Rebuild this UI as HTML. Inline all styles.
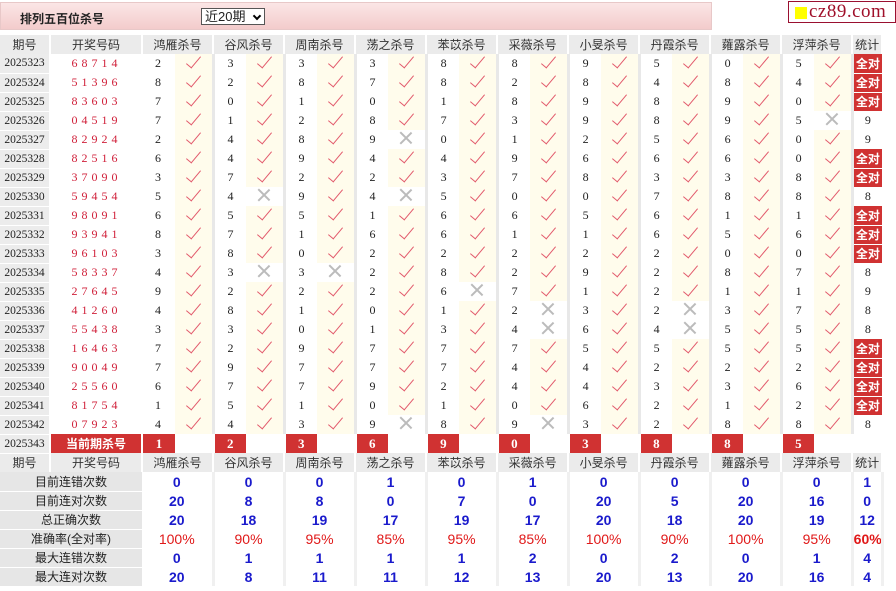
<!DOCTYPE html>
<html><head><meta charset="utf-8">
<style>
*{margin:0;padding:0;box-sizing:border-box}
body{width:896px;height:591px;background:#fff;font-family:"Liberation Sans","Noto Sans CJK SC",sans-serif;font-size:12px;color:#222;position:relative;overflow:hidden}
.top{position:absolute;left:0;top:2px;width:712px;height:28px;background:linear-gradient(#fbe6e6,#f3cccc);border:1px solid #e8c8c8}
.title{position:absolute;left:19px;top:7px;font-weight:bold;font-size:12px;color:#222}
.sel{position:absolute;left:200px;top:5px;width:64px;height:17px;border:1px solid #555;background:#fff;font-size:13px;line-height:15px;padding-left:3px}
.sel b{position:absolute;right:4px;top:4px;width:6px;height:6px;border-right:2px solid #000;border-bottom:2px solid #000;transform:rotate(45deg)}
.logo{position:absolute;left:788px;top:1px;width:108px;height:22px;border:1px solid #9a1030;background:#fff;overflow:hidden}
.logo i{position:absolute;left:6px;top:5px;width:12px;height:12px;background:#ffff00}
.logo span{position:absolute;left:20px;top:-1px;font-family:"Liberation Serif",serif;font-size:19px;color:#a0102a;letter-spacing:0.5px}
table{position:absolute;left:0;top:35px;border-collapse:collapse;table-layout:fixed;width:882px}
td{height:19px;padding:0;text-align:center;vertical-align:middle;white-space:nowrap;overflow:hidden}
.hd td{background:#ebebeb;border-right:2px solid #fff;font-size:12px;color:#333}
.p{background:#ececec;font-family:"Liberation Serif",serif;font-size:11.5px;border-right:2px solid #fff;border-bottom:1px solid #fff}
.h{color:#d0203a;font-family:"Liberation Serif",serif;letter-spacing:4px;font-size:12px}
.n{font-family:"Liberation Serif",serif;text-align:left;padding-left:13px;font-size:12px}
.c{background:#fffcec;border-right:3px solid #e8e8e8;position:relative}
.c.w{background:#fff}
.k{display:inline-block;width:7px;height:15px;border-right:1.6px solid #e25a6c;border-bottom:1.6px solid #e25a6c;transform:rotate(40deg);margin-top:-5px}
.x{display:inline-block;position:relative;width:14px;height:14px}
.x:before,.x:after{content:"";position:absolute;left:6px;top:-1px;width:1.5px;height:16px;background:#bbb;transform:rotate(45deg)}
.x:after{transform:rotate(-45deg)}
.t{font-family:"Liberation Serif",serif}
.t.a{background:#d03232;color:#fff;font-weight:bold;font-family:"Liberation Sans","Noto Sans CJK SC",sans-serif;font-size:12px;border-bottom:1px solid #fff}
.cur{background:#d03232;color:#fff;font-weight:bold;font-size:12px}
.kn{background:#d03232;color:#fff;font-weight:bold;font-family:"Liberation Serif",serif;font-size:13px;border-left:2px solid #fff}
.kc{border-right:3px solid #fff}
.lb{background:#e6e6e6;border-bottom:1px solid #fff;color:#222;font-size:12px}
.v{color:#1a1acc;font-weight:bold;font-size:14px;border-right:3px solid #f0f0f0}
.r{color:#e01818;font-weight:normal}
.r2{color:#e01818}
</style></head><body>
<div class="top"><div class="title">排列五百位杀号</div><div class="sel">近20期<b></b></div></div>
<div class="logo"><i></i><span>cz89.com</span></div>
<table>
<colgroup><col style="width:50px"><col style="width:92px">
<col style="width:33px"><col style="width:38px"><col style="width:33px"><col style="width:38px"><col style="width:33px"><col style="width:38px"><col style="width:33px"><col style="width:38px"><col style="width:33px"><col style="width:38px"><col style="width:33px"><col style="width:38px"><col style="width:33px"><col style="width:38px"><col style="width:33px"><col style="width:38px"><col style="width:33px"><col style="width:38px"><col style="width:33px"><col style="width:38px"><col style="width:30px"></colgroup>
<tr class="hd"><td>期号</td><td>开奖号码</td><td colspan="2">鸿雁杀号</td><td colspan="2">谷风杀号</td><td colspan="2">周南杀号</td><td colspan="2">荡之杀号</td><td colspan="2">苯苡杀号</td><td colspan="2">采薇杀号</td><td colspan="2">小旻杀号</td><td colspan="2">丹霞杀号</td><td colspan="2">蕹露杀号</td><td colspan="2">浮萍杀号</td><td>统计</td></tr>
<tr><td class="p">2025323</td><td class="h">68714</td><td class="n">2</td><td class="c"><i class="k"></i></td><td class="n">3</td><td class="c"><i class="k"></i></td><td class="n">3</td><td class="c"><i class="k"></i></td><td class="n">3</td><td class="c"><i class="k"></i></td><td class="n">8</td><td class="c"><i class="k"></i></td><td class="n">8</td><td class="c"><i class="k"></i></td><td class="n">9</td><td class="c"><i class="k"></i></td><td class="n">5</td><td class="c"><i class="k"></i></td><td class="n">0</td><td class="c"><i class="k"></i></td><td class="n">5</td><td class="c"><i class="k"></i></td><td class="t a">全对</td></tr>
<tr><td class="p">2025324</td><td class="h">51396</td><td class="n">8</td><td class="c"><i class="k"></i></td><td class="n">2</td><td class="c"><i class="k"></i></td><td class="n">8</td><td class="c"><i class="k"></i></td><td class="n">7</td><td class="c"><i class="k"></i></td><td class="n">8</td><td class="c"><i class="k"></i></td><td class="n">2</td><td class="c"><i class="k"></i></td><td class="n">8</td><td class="c"><i class="k"></i></td><td class="n">4</td><td class="c"><i class="k"></i></td><td class="n">8</td><td class="c"><i class="k"></i></td><td class="n">4</td><td class="c"><i class="k"></i></td><td class="t a">全对</td></tr>
<tr><td class="p">2025325</td><td class="h">83603</td><td class="n">7</td><td class="c"><i class="k"></i></td><td class="n">0</td><td class="c"><i class="k"></i></td><td class="n">1</td><td class="c"><i class="k"></i></td><td class="n">0</td><td class="c"><i class="k"></i></td><td class="n">1</td><td class="c"><i class="k"></i></td><td class="n">8</td><td class="c"><i class="k"></i></td><td class="n">9</td><td class="c"><i class="k"></i></td><td class="n">8</td><td class="c"><i class="k"></i></td><td class="n">9</td><td class="c"><i class="k"></i></td><td class="n">0</td><td class="c"><i class="k"></i></td><td class="t a">全对</td></tr>
<tr><td class="p">2025326</td><td class="h">04519</td><td class="n">7</td><td class="c"><i class="k"></i></td><td class="n">1</td><td class="c"><i class="k"></i></td><td class="n">2</td><td class="c"><i class="k"></i></td><td class="n">8</td><td class="c"><i class="k"></i></td><td class="n">7</td><td class="c"><i class="k"></i></td><td class="n">3</td><td class="c"><i class="k"></i></td><td class="n">9</td><td class="c"><i class="k"></i></td><td class="n">8</td><td class="c"><i class="k"></i></td><td class="n">9</td><td class="c"><i class="k"></i></td><td class="n">5</td><td class="c w"><i class="x"></i></td><td class="t">9</td></tr>
<tr><td class="p">2025327</td><td class="h">82924</td><td class="n">2</td><td class="c"><i class="k"></i></td><td class="n">4</td><td class="c"><i class="k"></i></td><td class="n">8</td><td class="c"><i class="k"></i></td><td class="n">9</td><td class="c w"><i class="x"></i></td><td class="n">0</td><td class="c"><i class="k"></i></td><td class="n">1</td><td class="c"><i class="k"></i></td><td class="n">2</td><td class="c"><i class="k"></i></td><td class="n">5</td><td class="c"><i class="k"></i></td><td class="n">6</td><td class="c"><i class="k"></i></td><td class="n">0</td><td class="c"><i class="k"></i></td><td class="t">9</td></tr>
<tr><td class="p">2025328</td><td class="h">82516</td><td class="n">6</td><td class="c"><i class="k"></i></td><td class="n">4</td><td class="c"><i class="k"></i></td><td class="n">9</td><td class="c"><i class="k"></i></td><td class="n">4</td><td class="c"><i class="k"></i></td><td class="n">4</td><td class="c"><i class="k"></i></td><td class="n">9</td><td class="c"><i class="k"></i></td><td class="n">6</td><td class="c"><i class="k"></i></td><td class="n">6</td><td class="c"><i class="k"></i></td><td class="n">6</td><td class="c"><i class="k"></i></td><td class="n">0</td><td class="c"><i class="k"></i></td><td class="t a">全对</td></tr>
<tr><td class="p">2025329</td><td class="h">37090</td><td class="n">3</td><td class="c"><i class="k"></i></td><td class="n">7</td><td class="c"><i class="k"></i></td><td class="n">2</td><td class="c"><i class="k"></i></td><td class="n">2</td><td class="c"><i class="k"></i></td><td class="n">3</td><td class="c"><i class="k"></i></td><td class="n">7</td><td class="c"><i class="k"></i></td><td class="n">8</td><td class="c"><i class="k"></i></td><td class="n">3</td><td class="c"><i class="k"></i></td><td class="n">3</td><td class="c"><i class="k"></i></td><td class="n">8</td><td class="c"><i class="k"></i></td><td class="t a">全对</td></tr>
<tr><td class="p">2025330</td><td class="h">59454</td><td class="n">5</td><td class="c"><i class="k"></i></td><td class="n">4</td><td class="c w"><i class="x"></i></td><td class="n">9</td><td class="c"><i class="k"></i></td><td class="n">4</td><td class="c w"><i class="x"></i></td><td class="n">5</td><td class="c"><i class="k"></i></td><td class="n">0</td><td class="c"><i class="k"></i></td><td class="n">0</td><td class="c"><i class="k"></i></td><td class="n">7</td><td class="c"><i class="k"></i></td><td class="n">8</td><td class="c"><i class="k"></i></td><td class="n">8</td><td class="c"><i class="k"></i></td><td class="t">8</td></tr>
<tr><td class="p">2025331</td><td class="h">98091</td><td class="n">6</td><td class="c"><i class="k"></i></td><td class="n">5</td><td class="c"><i class="k"></i></td><td class="n">5</td><td class="c"><i class="k"></i></td><td class="n">1</td><td class="c"><i class="k"></i></td><td class="n">6</td><td class="c"><i class="k"></i></td><td class="n">6</td><td class="c"><i class="k"></i></td><td class="n">5</td><td class="c"><i class="k"></i></td><td class="n">6</td><td class="c"><i class="k"></i></td><td class="n">1</td><td class="c"><i class="k"></i></td><td class="n">1</td><td class="c"><i class="k"></i></td><td class="t a">全对</td></tr>
<tr><td class="p">2025332</td><td class="h">93941</td><td class="n">8</td><td class="c"><i class="k"></i></td><td class="n">7</td><td class="c"><i class="k"></i></td><td class="n">1</td><td class="c"><i class="k"></i></td><td class="n">6</td><td class="c"><i class="k"></i></td><td class="n">6</td><td class="c"><i class="k"></i></td><td class="n">1</td><td class="c"><i class="k"></i></td><td class="n">1</td><td class="c"><i class="k"></i></td><td class="n">6</td><td class="c"><i class="k"></i></td><td class="n">5</td><td class="c"><i class="k"></i></td><td class="n">6</td><td class="c"><i class="k"></i></td><td class="t a">全对</td></tr>
<tr><td class="p">2025333</td><td class="h">96103</td><td class="n">3</td><td class="c"><i class="k"></i></td><td class="n">8</td><td class="c"><i class="k"></i></td><td class="n">0</td><td class="c"><i class="k"></i></td><td class="n">2</td><td class="c"><i class="k"></i></td><td class="n">2</td><td class="c"><i class="k"></i></td><td class="n">2</td><td class="c"><i class="k"></i></td><td class="n">2</td><td class="c"><i class="k"></i></td><td class="n">2</td><td class="c"><i class="k"></i></td><td class="n">0</td><td class="c"><i class="k"></i></td><td class="n">0</td><td class="c"><i class="k"></i></td><td class="t a">全对</td></tr>
<tr><td class="p">2025334</td><td class="h">58337</td><td class="n">4</td><td class="c"><i class="k"></i></td><td class="n">3</td><td class="c w"><i class="x"></i></td><td class="n">3</td><td class="c w"><i class="x"></i></td><td class="n">2</td><td class="c"><i class="k"></i></td><td class="n">8</td><td class="c"><i class="k"></i></td><td class="n">2</td><td class="c"><i class="k"></i></td><td class="n">9</td><td class="c"><i class="k"></i></td><td class="n">2</td><td class="c"><i class="k"></i></td><td class="n">8</td><td class="c"><i class="k"></i></td><td class="n">7</td><td class="c"><i class="k"></i></td><td class="t">8</td></tr>
<tr><td class="p">2025335</td><td class="h">27645</td><td class="n">9</td><td class="c"><i class="k"></i></td><td class="n">2</td><td class="c"><i class="k"></i></td><td class="n">2</td><td class="c"><i class="k"></i></td><td class="n">2</td><td class="c"><i class="k"></i></td><td class="n">6</td><td class="c w"><i class="x"></i></td><td class="n">7</td><td class="c"><i class="k"></i></td><td class="n">1</td><td class="c"><i class="k"></i></td><td class="n">2</td><td class="c"><i class="k"></i></td><td class="n">1</td><td class="c"><i class="k"></i></td><td class="n">1</td><td class="c"><i class="k"></i></td><td class="t">9</td></tr>
<tr><td class="p">2025336</td><td class="h">41260</td><td class="n">4</td><td class="c"><i class="k"></i></td><td class="n">8</td><td class="c"><i class="k"></i></td><td class="n">1</td><td class="c"><i class="k"></i></td><td class="n">0</td><td class="c"><i class="k"></i></td><td class="n">1</td><td class="c"><i class="k"></i></td><td class="n">2</td><td class="c w"><i class="x"></i></td><td class="n">3</td><td class="c"><i class="k"></i></td><td class="n">2</td><td class="c w"><i class="x"></i></td><td class="n">3</td><td class="c"><i class="k"></i></td><td class="n">7</td><td class="c"><i class="k"></i></td><td class="t">8</td></tr>
<tr><td class="p">2025337</td><td class="h">55438</td><td class="n">3</td><td class="c"><i class="k"></i></td><td class="n">3</td><td class="c"><i class="k"></i></td><td class="n">0</td><td class="c"><i class="k"></i></td><td class="n">1</td><td class="c"><i class="k"></i></td><td class="n">3</td><td class="c"><i class="k"></i></td><td class="n">4</td><td class="c w"><i class="x"></i></td><td class="n">6</td><td class="c"><i class="k"></i></td><td class="n">4</td><td class="c w"><i class="x"></i></td><td class="n">5</td><td class="c"><i class="k"></i></td><td class="n">5</td><td class="c"><i class="k"></i></td><td class="t">8</td></tr>
<tr><td class="p">2025338</td><td class="h">16463</td><td class="n">7</td><td class="c"><i class="k"></i></td><td class="n">2</td><td class="c"><i class="k"></i></td><td class="n">9</td><td class="c"><i class="k"></i></td><td class="n">7</td><td class="c"><i class="k"></i></td><td class="n">7</td><td class="c"><i class="k"></i></td><td class="n">7</td><td class="c"><i class="k"></i></td><td class="n">5</td><td class="c"><i class="k"></i></td><td class="n">5</td><td class="c"><i class="k"></i></td><td class="n">5</td><td class="c"><i class="k"></i></td><td class="n">5</td><td class="c"><i class="k"></i></td><td class="t a">全对</td></tr>
<tr><td class="p">2025339</td><td class="h">90049</td><td class="n">7</td><td class="c"><i class="k"></i></td><td class="n">9</td><td class="c"><i class="k"></i></td><td class="n">7</td><td class="c"><i class="k"></i></td><td class="n">7</td><td class="c"><i class="k"></i></td><td class="n">7</td><td class="c"><i class="k"></i></td><td class="n">4</td><td class="c"><i class="k"></i></td><td class="n">4</td><td class="c"><i class="k"></i></td><td class="n">2</td><td class="c"><i class="k"></i></td><td class="n">2</td><td class="c"><i class="k"></i></td><td class="n">2</td><td class="c"><i class="k"></i></td><td class="t a">全对</td></tr>
<tr><td class="p">2025340</td><td class="h">25560</td><td class="n">6</td><td class="c"><i class="k"></i></td><td class="n">7</td><td class="c"><i class="k"></i></td><td class="n">7</td><td class="c"><i class="k"></i></td><td class="n">9</td><td class="c"><i class="k"></i></td><td class="n">2</td><td class="c"><i class="k"></i></td><td class="n">4</td><td class="c"><i class="k"></i></td><td class="n">4</td><td class="c"><i class="k"></i></td><td class="n">3</td><td class="c"><i class="k"></i></td><td class="n">3</td><td class="c"><i class="k"></i></td><td class="n">6</td><td class="c"><i class="k"></i></td><td class="t a">全对</td></tr>
<tr><td class="p">2025341</td><td class="h">81754</td><td class="n">1</td><td class="c"><i class="k"></i></td><td class="n">5</td><td class="c"><i class="k"></i></td><td class="n">1</td><td class="c"><i class="k"></i></td><td class="n">0</td><td class="c"><i class="k"></i></td><td class="n">1</td><td class="c"><i class="k"></i></td><td class="n">0</td><td class="c"><i class="k"></i></td><td class="n">6</td><td class="c"><i class="k"></i></td><td class="n">2</td><td class="c"><i class="k"></i></td><td class="n">1</td><td class="c"><i class="k"></i></td><td class="n">2</td><td class="c"><i class="k"></i></td><td class="t a">全对</td></tr>
<tr><td class="p">2025342</td><td class="h">07923</td><td class="n">4</td><td class="c"><i class="k"></i></td><td class="n">4</td><td class="c"><i class="k"></i></td><td class="n">3</td><td class="c"><i class="k"></i></td><td class="n">9</td><td class="c w"><i class="x"></i></td><td class="n">8</td><td class="c"><i class="k"></i></td><td class="n">9</td><td class="c w"><i class="x"></i></td><td class="n">3</td><td class="c"><i class="k"></i></td><td class="n">2</td><td class="c"><i class="k"></i></td><td class="n">8</td><td class="c"><i class="k"></i></td><td class="n">8</td><td class="c"><i class="k"></i></td><td class="t">8</td></tr>
<tr><td class="p">2025343</td><td class="cur">当前期杀号</td><td class="kn">1</td><td class="kc"></td><td class="kn">2</td><td class="kc"></td><td class="kn">3</td><td class="kc"></td><td class="kn">6</td><td class="kc"></td><td class="kn">9</td><td class="kc"></td><td class="kn">0</td><td class="kc"></td><td class="kn">3</td><td class="kc"></td><td class="kn">8</td><td class="kc"></td><td class="kn">8</td><td class="kc"></td><td class="kn">5</td><td class="kc"></td><td></td></tr>
<tr class="hd"><td>期号</td><td>开奖号码</td><td colspan="2">鸿雁杀号</td><td colspan="2">谷风杀号</td><td colspan="2">周南杀号</td><td colspan="2">荡之杀号</td><td colspan="2">苯苡杀号</td><td colspan="2">采薇杀号</td><td colspan="2">小旻杀号</td><td colspan="2">丹霞杀号</td><td colspan="2">蕹露杀号</td><td colspan="2">浮萍杀号</td><td>统计</td></tr>
<tr><td class="lb" colspan="2">目前连错次数</td><td class="v" colspan="2">0</td><td class="v" colspan="2">0</td><td class="v" colspan="2">0</td><td class="v" colspan="2">1</td><td class="v" colspan="2">0</td><td class="v" colspan="2">1</td><td class="v" colspan="2">0</td><td class="v" colspan="2">0</td><td class="v" colspan="2">0</td><td class="v" colspan="2">0</td><td class="v">1</td></tr>
<tr><td class="lb" colspan="2">目前连对次数</td><td class="v" colspan="2">20</td><td class="v" colspan="2">8</td><td class="v" colspan="2">8</td><td class="v" colspan="2">0</td><td class="v" colspan="2">7</td><td class="v" colspan="2">0</td><td class="v" colspan="2">20</td><td class="v" colspan="2">5</td><td class="v" colspan="2">20</td><td class="v" colspan="2">16</td><td class="v">0</td></tr>
<tr><td class="lb" colspan="2">总正确次数</td><td class="v" colspan="2">20</td><td class="v" colspan="2">18</td><td class="v" colspan="2">19</td><td class="v" colspan="2">17</td><td class="v" colspan="2">19</td><td class="v" colspan="2">17</td><td class="v" colspan="2">20</td><td class="v" colspan="2">18</td><td class="v" colspan="2">20</td><td class="v" colspan="2">19</td><td class="v">12</td></tr>
<tr><td class="lb" colspan="2">准确率(全对率)</td><td class="v r" colspan="2">100%</td><td class="v r" colspan="2">90%</td><td class="v r" colspan="2">95%</td><td class="v r" colspan="2">85%</td><td class="v r" colspan="2">95%</td><td class="v r" colspan="2">85%</td><td class="v r" colspan="2">100%</td><td class="v r" colspan="2">90%</td><td class="v r" colspan="2">100%</td><td class="v r" colspan="2">95%</td><td class="v r2">60%</td></tr>
<tr><td class="lb" colspan="2">最大连错次数</td><td class="v" colspan="2">0</td><td class="v" colspan="2">1</td><td class="v" colspan="2">1</td><td class="v" colspan="2">1</td><td class="v" colspan="2">1</td><td class="v" colspan="2">2</td><td class="v" colspan="2">0</td><td class="v" colspan="2">2</td><td class="v" colspan="2">0</td><td class="v" colspan="2">1</td><td class="v">4</td></tr>
<tr><td class="lb" colspan="2">最大连对次数</td><td class="v" colspan="2">20</td><td class="v" colspan="2">8</td><td class="v" colspan="2">11</td><td class="v" colspan="2">11</td><td class="v" colspan="2">12</td><td class="v" colspan="2">13</td><td class="v" colspan="2">20</td><td class="v" colspan="2">13</td><td class="v" colspan="2">20</td><td class="v" colspan="2">16</td><td class="v">4</td></tr>
</table>
</body></html>
